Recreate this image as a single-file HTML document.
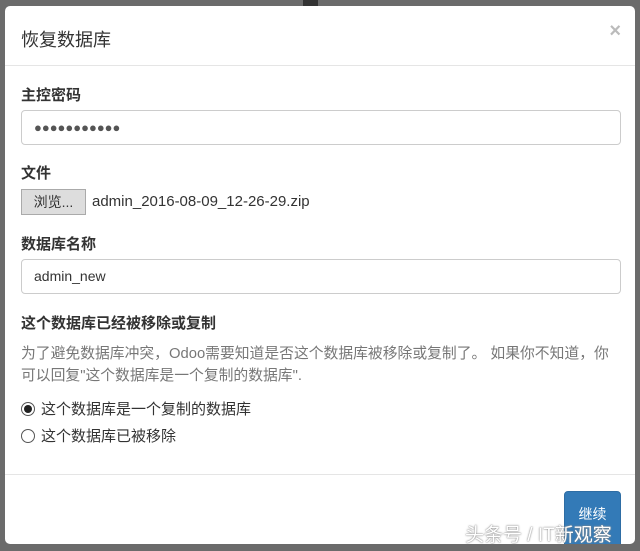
<!DOCTYPE html>
<html><head><meta charset="utf-8"><style>
*{box-sizing:border-box;margin:0;padding:0}
body{width:640px;height:551px;background:#6b6b6b;font-family:"Liberation Sans","Noto Sans CJK SC",sans-serif;color:#333;position:relative;overflow:hidden}
.bar{position:absolute;left:303px;top:0;width:15px;height:8px;background:#333}
.modal{position:absolute;left:5px;top:6px;width:630px;height:538px;background:#fff;border-radius:5px;overflow:hidden}
.hd{height:60px;border-bottom:1px solid #e5e5e5;position:relative}
.hd h4{position:absolute;left:16px;top:20px;font-size:18px;font-weight:normal;color:#333}
.x{position:absolute;right:14px;top:14px;font-size:20px;color:#bbb;font-weight:bold}
.lbl{position:absolute;left:16px;font-size:15px;font-weight:bold;color:#333}
.inp{position:absolute;left:16px;width:600px;height:35px;border:1px solid #ccc;border-radius:4px;font-size:14px;padding:8px 12px}
.dots{font-size:13px;letter-spacing:0px;color:#555;line-height:16px}
.btn{position:absolute;left:16px;top:183px;width:65px;height:26px;background:#ddd;border:1px solid #aaa;font-size:14px;text-align:center;line-height:24px}
.fn{position:absolute;left:87px;top:187px;font-size:15px}
.help{position:absolute;left:16px;top:337px;font-size:14.8px;color:#777;line-height:22px;width:620px;white-space:nowrap}
.r{position:absolute;left:16px;font-size:15px;color:#333}
.r i{display:inline-block;width:14px;height:14px;border:1px solid #555;border-radius:50%;vertical-align:-2px;margin-right:6px;position:relative}
.r i.on:after{content:"";position:absolute;left:2px;top:2px;width:8px;height:8px;background:#222;border-radius:50%}
.ft{position:absolute;left:0;top:468px;width:100%;border-top:1px solid #e5e5e5}
.go{position:absolute;left:559px;top:485px;width:57px;height:60px;background:#337ab7;border:1px solid #2e6da4;border-radius:4px;color:#fff;font-size:14px;text-align:center;padding-top:12px}
.wm{position:absolute;left:465px;top:520px;font-size:19px;color:#fff;text-shadow:0 0 1px #777,0 0 2px #999}
</style></head><body>
<div class="bar"></div>
<div class="modal">
<div class="hd"><h4>恢复数据库</h4><span class="x">×</span></div>
<div class="lbl" style="top:78px">主控密码</div>
<div class="inp" style="top:104px"><span class="dots">●●●●●●●●●●●</span></div>
<div class="lbl" style="top:156px">文件</div>
<div class="btn">浏览...</div>
<div class="fn">admin_2016-08-09_12-26-29.zip</div>
<div class="lbl" style="top:227px">数据库名称</div>
<div class="inp" style="top:253px">admin_new</div>
<div class="lbl" style="top:306px">这个数据库已经被移除或复制</div>
<div class="help">为了避免数据库冲突，Odoo需要知道是否这个数据库被移除或复制了。 如果你不知道，你<br>可以回复"这个数据库是一个复制的数据库".</div>
<div class="r" style="top:392px"><i class="on"></i>这个数据库是一个复制的数据库</div>
<div class="r" style="top:419px"><i></i>这个数据库已被移除</div>
<div class="ft"></div>
<div class="go">继续</div>
</div>
<div class="wm">头条号 / IT新观察</div>
</body></html>
